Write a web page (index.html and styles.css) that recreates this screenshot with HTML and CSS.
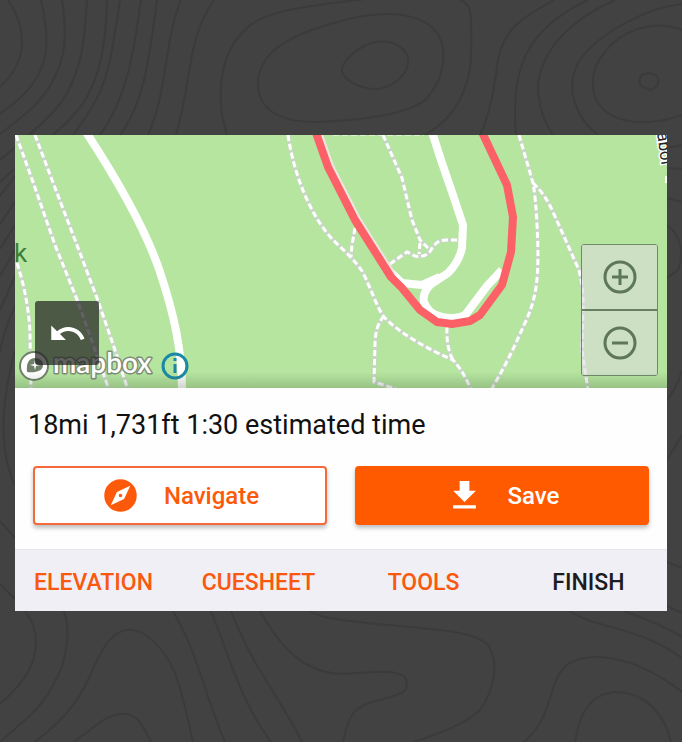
FILE: index.html
```html
<!DOCTYPE html>
<html lang="en">
<head>
<meta charset="utf-8">
<meta name="viewport" content="width=device-width, initial-scale=1">
<title>Route planner</title>
<link rel="stylesheet" href="styles.css">
</head>
<body>
<svg class="contours" viewBox="0 0 682 742" preserveAspectRatio="xMidYMid slice" aria-hidden="true">
  <path d="M8 0C18 14 22 28 22 42C22 60 12 76 0 87"/>
  <path d="M41 0C50 40 48 62 34 82C26 94 14 104 0 114"/>
  <path d="M62 0C68 40 65 60 50 86C38 106 18 120 0 134"/>
  <path d="M87 0C84 44 82 66 66 95C54 114 42 124 0 160"/>
  <path d="M107 0C106 44 100 76 84 102C72 120 60 128 0 182"/>
  <path d="M120 0C112 54 108 78 96 100C88 114 80 126 73 135"/>
  <path d="M141 0C134 50 128 96 100 135"/>
  <path d="M157 0C150 50 146 100 120 135"/>
  <path d="M181 0C164 40 168 90 148 135"/>
  <path d="M214 0C186 40 192 82 176 135"/>
  <path d="M341 2C290 8 262 14 247 28C222 50 218 82 222 115L227 135"/>
  <path d="M341 2L365 -1M460 0C469 4 470 8 471 20C472 60 472 78 458 103C448 120 436 128 425 135"/>
  <path d="M341 21C300 32 262 46 258 80C256 110 280 122 315 122C360 121 410 114 426 99C442 82 446 60 442 44C436 20 408 13 383 14C368 15 354 17 341 21Z"/>
  <path d="M343 66C346 58 360 46 372 43C388 39 404 44 408 58C410 72 396 86 378 89C362 90 336 78 343 66Z"/>
  <path d="M554 0C518 20 504 30 498 60C494 90 490 114 480 135"/>
  <path d="M588 0C528 28 510 66 516 135"/>
  <path d="M615 0C562 24 542 54 538 84C538 106 544 122 553 135"/>
  <path d="M682 4C644 8 596 36 580 60C562 88 578 120 598 135"/>
  <path d="M682 30C650 18 620 32 604 53C590 70 588 96 604 110C618 122 646 128 682 115"/>
  <path d="M640 78C642 72 652 72 657 76C661 84 656 88 650 90C646 86 638 90 640 78Z"/>
  <path d="M15 176L0 196M15 202L0 224M15 225L0 249M15 250L0 276M15 276L0 310M15 306Q5 326 0 352M15 350C2 400 -2 450 15 485M0 521L15 538M0 584L15 599"/>
  <path d="M667 148L682 145M667 168L682 169M667 198L682 202M667 225C682 236 684 254 678 270L667 278M682 370Q677 388 667 400M682 435L667 460M667 562L682 568M667 606L682 613"/>
  <path d="M25 611C36 626 38 640 34 657C30 674 16 690 0 704"/>
  <path d="M64 611C70 628 68 646 62 666C54 686 44 704 24 721L0 742"/>
  <path d="M35 742C60 722 76 706 88 680C98 658 108 632 127 630C144 628 164 648 174 671C184 696 188 722 193 742"/>
  <path d="M73 742C92 730 106 714 122 714C140 714 142 726 151 742"/>
  <path d="M173 611C200 658 206 700 225 742"/>
  <path d="M211 611C230 658 240 700 271 742"/>
  <path d="M231 611C256 674 276 690 302 742"/>
  <path d="M260 611C280 646 302 672 341 674C362 674 392 667 405 677C408 684 407 690 403 692C382 702 366 700 354 712C346 724 345 734 343 742"/>
  <path d="M309 611C322 619 344 620 376 624C430 629 474 630 488 645C500 664 494 690 480 710C464 726 430 736 414 742"/>
  <path d="M524 742C556 714 546 682 568 664C590 650 636 656 682 692"/>
  <path d="M575 742C580 710 592 694 614 692C650 692 666 720 671 742"/>
  <path d="M569 611C600 630 638 626 682 658"/>
  <path d="M624 611C644 618 664 626 682 637"/>
</svg>

<main class="screen">
  <section class="card">
    <div class="map">
      <svg class="map-canvas" viewBox="15 135 652 253" preserveAspectRatio="xMidYMid slice" role="img" aria-label="Route map">
        <g class="path-casing">
          <path d="M16 135L33 182L55 245L78 302L95 350L109 390"/>
          <path d="M35 135L57 193L80 253L97 298L115 350L128 390"/>
          <path d="M17 263Q29 300 30 335L31 390"/>
          <path d="M288 135C294 175 310 215 333 240C346 252 356 262 362 271C372 290 376 306 384 317C400 334 430 350 453 360Q464 372 471 390"/>
          <path d="M355 228L352 245L351 257"/>
          <path d="M384 316Q375 326 375 345L374 382L396 389"/>
          <path d="M383 135L402 178L412 220L420 240L430 250"/>
          <path d="M390 264L407 252L415 256Q426 258 431 250Q436 240 446 240H458M420 243L419 254"/>
          <path d="M447 327Q446 347 453 360"/>
          <path d="M519 135L533 183Q536 200 537 225C540 280 536 300 524 325Q508 362 491 390"/>
          <path d="M533 183Q545 194 553 212L579 270Q584 290 583 310L582 350L588 390"/>
        </g>
        <g class="path-dash">
          <path d="M16 135L33 182L55 245L78 302L95 350L109 390"/>
          <path d="M35 135L57 193L80 253L97 298L115 350L128 390"/>
          <path d="M17 263Q29 300 30 335L31 390"/>
          <path d="M288 135C294 175 310 215 333 240C346 252 356 262 362 271C372 290 376 306 384 317C400 334 430 350 453 360Q464 372 471 390"/>
          <path d="M355 228L352 245L351 257"/>
          <path d="M384 316Q375 326 375 345L374 382L396 389"/>
          <path d="M383 135L402 178L412 220L420 240L430 250"/>
          <path d="M390 264L407 252L415 256Q426 258 431 250Q436 240 446 240H458M420 243L419 254"/>
          <path d="M447 327Q446 347 453 360"/>
          <path d="M519 135L533 183Q536 200 537 225C540 280 536 300 524 325Q508 362 491 390"/>
          <path d="M533 183Q545 194 553 212L579 270Q584 290 583 310L582 350L588 390"/>
          <path d="M333 134H424"/>
        </g>
        <g class="road">
          <path d="M86 132C120 184 148 236 160 272C174 314 182 350 182 390"/>
          <path d="M432 132L441 160L453 195L463 225L462 248Q459 262 448 273L430 285Q422 294 424 302Q428 314 442 317Q458 320 466 314L487 286L502 270"/>
          <path d="M388 270L402 283L422 285L440 277"/>
          <path class="road-edge" d="M319 132L331 166L358 219L394 276"/>
        </g>
        <path class="route" d="M315 130L328 167L355 220L391 277L402 288L420 310L437 322L452 324L470 321L480 315L502 285L511 252L513 217L507 185L481 130"/>
        <text class="map-park" x="14" y="262">k</text>
        <text class="map-street" transform="translate(657 133) rotate(82)">abor</text>
        <path class="street-halo" d="M666 176V183"/>
        <g class="logo">
          <circle class="logo-ring" cx="34" cy="366" r="14"/>
          <path class="logo-drop" d="M27 372C26 363 29 358 35 358C40 358 43 361 43 365C43 371 36 373 27 372Z"/>
          <path class="logo-star" d="M35 360L36 364L40 365L36 366L35 370L34 366L30 365L34 364Z"/>
          <text class="logo-text" x="53" y="373">mapbox</text>
        </g>
        <g class="info">
          <circle cx="175" cy="366" r="12"/>
          <path d="M175 364V373M175 358V361"/>
        </g>
      </svg>
      <button class="undo" type="button" aria-label="Undo">
        <svg class="icon" viewBox="0 0 24 24"><path d="M12.5 8C9.85 8 7.45 8.99 5.6 10.6L2 7V16H11L7.38 12.38C8.77 11.22 10.54 10.5 12.5 10.5C16.04 10.5 19.05 12.81 20.1 16L22.47 15.22C21.08 11.03 17.15 8 12.5 8Z"/></svg>
      </button>
      <div class="zoom">
        <button class="zoom-button" type="button" aria-label="Zoom in">
          <svg class="zoom-icon" viewBox="0 0 34 34"><circle cx="17" cy="17" r="15"/><path d="M17 9V25M9 17H25"/></svg>
        </button>
        <button class="zoom-button" type="button" aria-label="Zoom out">
          <svg class="zoom-icon" viewBox="0 0 34 34"><circle cx="17" cy="17" r="15"/><path d="M9 17H25"/></svg>
        </button>
      </div>
    </div>

    <div class="summary">
      <p class="stats">18mi 1,731ft 1:30 estimated time</p>
      <div class="actions">
        <button class="action action-outline" type="button">
          <svg class="icon" viewBox="0 0 24 24" aria-hidden="true"><path fill-rule="evenodd" d="M12 2A10 10 0 1 0 12 22A10 10 0 1 0 12 2ZM18 6L14.2 14.2L6 18L9.8 9.8ZM12 10.9A1.1 1.1 0 1 0 12 13.1A1.1 1.1 0 1 0 12 10.9Z"/></svg>
          <span>Navigate</span>
        </button>
        <button class="action action-solid" type="button">
          <svg class="icon" viewBox="0 0 24 24" aria-hidden="true"><path d="M19 9h-4V3H9v6H5l7 7 7-7zM5 18v2h14v-2H5z"/></svg>
          <span>Save</span>
        </button>
      </div>
    </div>

    <nav class="tabs">
      <button class="tab" type="button">ELEVATION</button>
      <button class="tab" type="button">CUESHEET</button>
      <button class="tab" type="button">TOOLS</button>
      <button class="tab tab-finish" type="button">FINISH</button>
    </nav>
  </section>
</main>
</body>
</html>
```
FILE: styles.css
```css
* {
  box-sizing: border-box;
}

body {
  position: relative;
  min-height: 100vh;
  margin: 0;
  background: #424242;
  font-family: Roboto, "Liberation Sans", sans-serif;
}

button {
  margin: 0;
  padding: 0;
  border: 0;
  font: inherit;
  cursor: pointer;
}

.contours {
  position: absolute;
  inset: 0;
  width: 100%;
  height: 100%;
  fill: none;
  stroke: #3b3b3b;
  stroke-width: 2;
}

.screen {
  position: relative;
  padding: 135px 15px 0;
}

.card {
  overflow: hidden;
  background: #fefefe;
}

.map {
  position: relative;
  background: #b6e5a0;
}

.map::after {
  content: "";
  position: absolute;
  inset: auto 0 0;
  height: 16px;
  background: linear-gradient(rgba(60, 90, 50, 0), rgba(60, 90, 50, 0.25));
  pointer-events: none;
}

.map-canvas {
  display: block;
  width: 100%;
  fill: none;
}

.path-casing {
  stroke: #c9d6c8;
  stroke-width: 4;
}

.path-dash {
  stroke: #ffffff;
  stroke-width: 3;
  stroke-dasharray: 6 3;
}

.road {
  stroke: #ffffff;
  stroke-width: 8;
  stroke-linejoin: round;
}

.road-edge {
  stroke: #f3e4e4;
  stroke-width: 6;
}

.route {
  stroke: #fb6166;
  stroke-width: 8;
  stroke-linejoin: round;
}

.map-park {
  fill: #3f7f38;
  font-size: 26px;
}

.map-street {
  fill: #222222;
  stroke: #ffffff;
  stroke-width: 3;
  paint-order: stroke;
  font-size: 17px;
}

.street-halo {
  stroke: #ffffff;
  stroke-width: 2;
}

.logo-ring {
  fill: #ffffff;
  stroke: #71806b;
  stroke-width: 2;
}

.logo-drop {
  fill: #71806b;
}

.logo-star {
  fill: #ffffff;
}

.logo-text {
  fill: #ffffff;
  stroke: #7d8c77;
  stroke-width: 3;
  stroke-linejoin: round;
  paint-order: stroke;
  font-family: Lato, sans-serif;
  font-size: 28px;
  font-weight: 600;
}

.info {
  stroke: #1989a6;
  stroke-width: 3;
}

.icon {
  flex: none;
  width: 39px;
  height: 39px;
  fill: currentColor;
}

.undo {
  position: absolute;
  left: 20px;
  bottom: 23px;
  display: flex;
  align-items: center;
  justify-content: center;
  width: 64px;
  height: 64px;
  border-radius: 3px;
  background: rgba(30, 30, 30, 0.7);
  color: #ffffff;
}

.zoom {
  position: absolute;
  right: 9px;
  bottom: 12px;
  width: 77px;
  border: 1px solid #6f8a67;
  border-radius: 3px;
}

.zoom-button {
  display: flex;
  align-items: center;
  justify-content: center;
  width: 100%;
  height: 64px;
  background: rgba(220, 220, 220, 0.6);
}

.zoom-button + .zoom-button {
  height: 66px;
  border-top: 2px solid #68805f;
}

.zoom-icon {
  width: 34px;
  height: 34px;
  fill: none;
  stroke: #5e7759;
  stroke-width: 3;
}

.summary {
  padding: 19px 18px 24px;
}

.stats {
  margin: 0 -5px 23px;
  color: #111111;
  font-size: 27px;
  line-height: 36px;
}

.actions {
  display: grid;
  grid-template-columns: 1fr 1fr;
  gap: 28px;
}

.action {
  display: flex;
  align-items: center;
  justify-content: center;
  gap: 24px;
  height: 59px;
  border: 2px solid #ff5a00;
  border-radius: 4px;
  box-shadow: 0 3px 4px rgba(0, 0, 0, 0.25);
  font-size: 24px;
  font-weight: 500;
}

.action-outline {
  border-color: #f4693a;
  background: #ffffff;
  color: #fc5a0a;
}

.action-solid {
  background: #ff5a00;
  color: #ffffff;
}

.tabs {
  display: grid;
  grid-template-columns: repeat(4, 1fr);
  padding-top: 4px;
  margin: 0 -4px;
  border-top: 1px solid #e6e5ea;
  background: #f0eff5;
}

.tab {
  height: 57px;
  background: none;
  color: #f9580f;
  font-size: 23px;
  font-weight: 500;
}

.tab-finish {
  color: #1c1c20;
}
```
